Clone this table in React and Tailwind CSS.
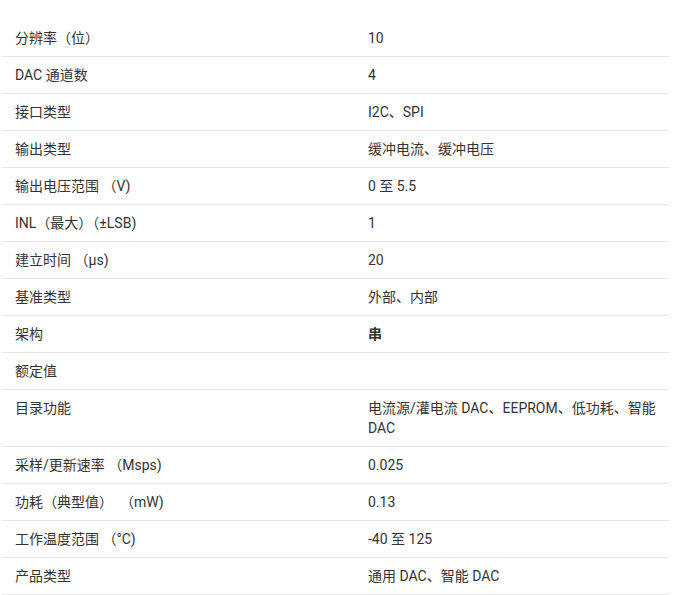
import React from "react";

const rows = [
  ["分辨率（位）", "10"],
  ["DAC 通道数", "4"],
  ["接口类型", "I2C、SPI"],
  ["输出类型", "缓冲电流、缓冲电压"],
  ["输出电压范围 （V)", "0 至 5.5"],
  ["INL（最大）（±LSB)", "1"],
  ["建立时间 （µs)", "20"],
  ["基准类型", "外部、内部"],
  ["架构", "串", true],
  ["额定值", ""],
  ["目录功能", "电流源/灌电流 DAC、EEPROM、低功耗、智能 DAC"],
  ["采样/更新速率 （Msps)", "0.025"],
  ["功耗（典型值）  （mW)", "0.13"],
  ["工作温度范围 （°C)", "-40 至 125"],
  ["产品类型", "通用 DAC、智能 DAC"],
];

export default function App() {
  return (
    <div
      className="bg-white pt-[20px] pl-[2px] w-[680px] h-[595px] text-[14px] leading-5 text-[#333]"
      style={{ fontFamily: '"Roboto", "Noto Sans CJK SC", sans-serif' }}
    >
      <div className="w-[667px]">
        {rows.map(([k, v, bold], i) => (
          <div
            key={i}
            className="grid grid-cols-[353px_1fr] border-b border-[#e6e6e6]"
          >
            <div className="pl-[13px] py-2 whitespace-pre">{k}</div>
            <div className={"pl-[13px] pr-[10px] py-2 min-h-[36px]" + (bold ? " font-bold" : "")}>
              {v}
            </div>
          </div>
        ))}
      </div>
    </div>
  );
}
